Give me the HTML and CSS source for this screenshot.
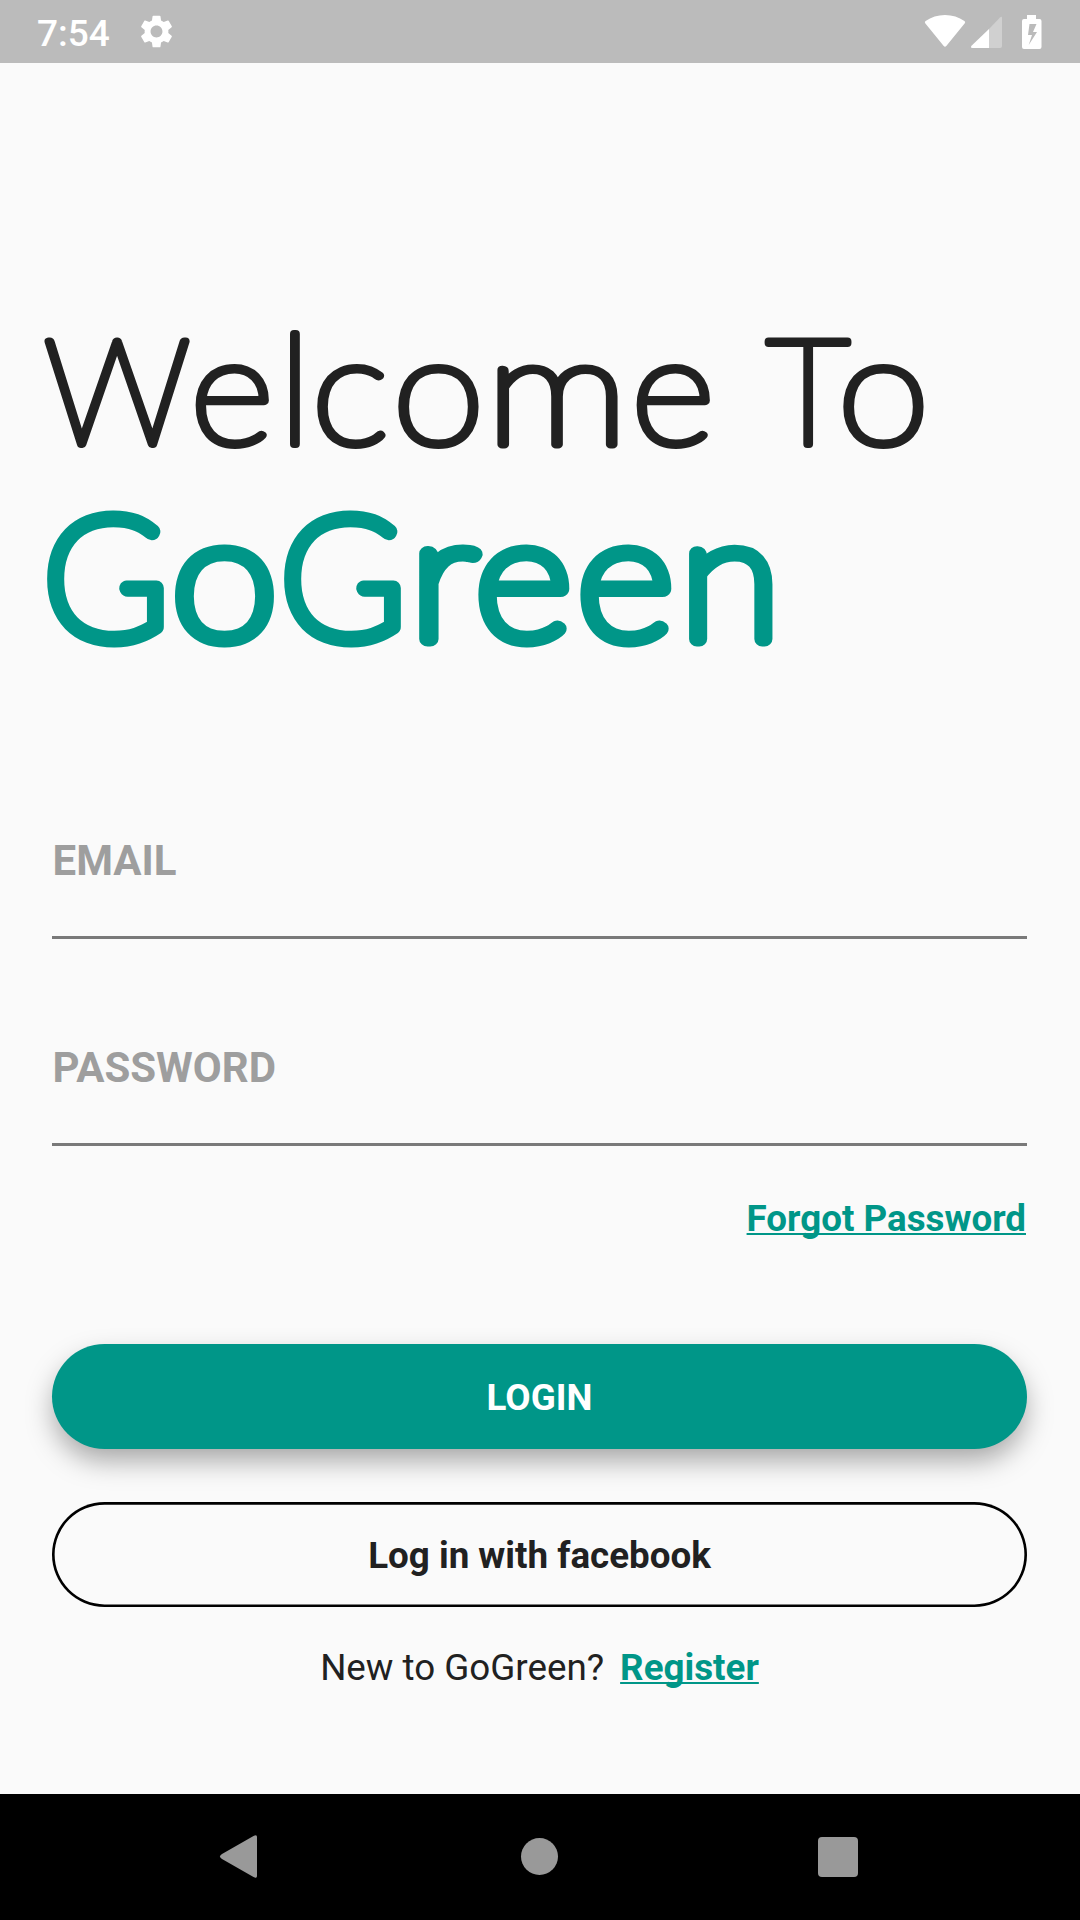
FILE: index.html
```html
<!DOCTYPE html>
<html lang="en">
<head>
<meta charset="utf-8">
<title>GoGreen</title>
<link rel="stylesheet" href="styles.css">
</head>
<body>
<div class="screen">
  <header class="status-bar">
    <span class="clock">7:54</span>
    <svg class="icon-gear" viewBox="2 2 20 20"><path d="M19.14 12.94c.04-.3.06-.61.06-.94 0-.32-.02-.64-.07-.94l2.03-1.58a.49.49 0 0 0 .12-.61l-1.92-3.32a.488.488 0 0 0-.59-.22l-2.39.96c-.5-.38-1.03-.7-1.62-.94l-.36-2.54a.484.484 0 0 0-.48-.41h-3.84c-.24 0-.43.17-.47.41l-.36 2.54c-.59.24-1.13.57-1.62.94l-2.39-.96c-.22-.08-.47 0-.59.22L2.74 8.87c-.12.21-.08.47.12.61l2.03 1.58c-.05.3-.09.63-.09.94s.02.64.07.94l-2.03 1.58a.49.49 0 0 0-.12.61l1.92 3.32c.12.22.37.29.59.22l2.39-.96c.5.38 1.03.7 1.62.94l.36 2.54c.05.24.24.41.48.41h3.84c.24 0 .44-.17.47-.41l.36-2.54c.59-.24 1.13-.56 1.62-.94l2.39.96c.22.08.47 0 .59-.22l1.92-3.32c.12-.22.07-.47-.12-.61l-2.01-1.58zM12 15.6c-1.98 0-3.6-1.62-3.6-3.6s1.62-3.6 3.6-3.6 3.6 1.62 3.6 3.6-1.62 3.6-3.6 3.6z"/></svg>
    <svg class="icon-status" viewBox="0 0 120 36"><path d="M1.2 8.2Q.2 7 1.6 6Q10 0 21 0T40.400 6Q41.800 7 40.800 8.200L22.300 31Q21 32.500 19.700 31Z"/><path class="faded" d="M78 3V31Q78 33 76 33H65V14L76 2.500Q78 1 78 3Z"/><path d="M65 14V33H48.500Q46 33 47.500 30.800Z"/><path fill-rule="evenodd" d="M103 0h9v4h3.500q2 0 2 2v26q0 2-2 2H100q-2 0-2-2V6q0-2 2-2h3ZM105.500 9L104 20h4L104.700 30L113 17h-4L112.500 9Z"/></svg>
  </header>

  <main class="content">
    <h1 class="headline">
      <svg class="headline-art" viewBox="0 0 1000 360">
        <text class="welcome" y="140.500"><tspan x="14">W</tspan><tspan class="lower" x="160" textLength="83.5" lengthAdjust="spacingAndGlyphs">e</tspan><tspan class="lower" x="249">l</tspan><tspan class="lower" x="281.5" textLength="77" lengthAdjust="spacingAndGlyphs">c</tspan><tspan class="lower" x="362.5" textLength="92" lengthAdjust="spacingAndGlyphs">o</tspan><tspan class="lower" x="455.5" textLength="143" lengthAdjust="spacingAndGlyphs">m</tspan><tspan class="lower" x="601" textLength="83.5" lengthAdjust="spacingAndGlyphs">e</tspan> <tspan x="736.5">T</tspan><tspan class="lower" x="807.500" textLength="92" lengthAdjust="spacingAndGlyphs">o</tspan></text>
        <text class="brand" y="336"><tspan x="13">G</tspan><tspan class="lower" x="141.5" textLength="106" lengthAdjust="spacingAndGlyphs">o</tspan><tspan x="250">G</tspan><tspan class="lower" x="379.5" textLength="68" lengthAdjust="spacingAndGlyphs">r</tspan><tspan class="lower" x="445" textLength="96.5" lengthAdjust="spacingAndGlyphs">e</tspan><tspan class="lower" x="547" textLength="96.5" lengthAdjust="spacingAndGlyphs">e</tspan><tspan class="lower" x="650" textLength="100.5" lengthAdjust="spacingAndGlyphs">n</tspan></text>
      </svg>
    </h1>

    <form class="login">
      <div class="field">EMAIL</div>
      <div class="field">PASSWORD</div>
      <a class="link forgot">Forgot Password</a>
      <div class="button primary">LOGIN</div>
      <div class="button outlined">Log in with facebook</div>
      <p class="register"><span>New to GoGreen?</span><a class="link">Register</a></p>
    </form>
  </main>

  <nav class="nav-bar">
    <svg viewBox="0 0 42 58"><path d="M3 31Q-1 28.500 3 26L34.500 8Q38 6 38 9V48Q38 51 34.500 49Z"/></svg>
    <svg viewBox="0 0 42 58"><circle cx="21.500" cy="28.500" r="18.500"/></svg>
    <svg viewBox="0 0 42 58"><rect x="1" y="9" width="40" height="40" rx="4"/></svg>
  </nav>
</div>
</body>
</html>
```

FILE: styles.css
```css
* { box-sizing: border-box; }
body { margin: 0; font-family: Roboto, sans-serif; color: #212121; background: #fafafa; }
.screen { width: 1080px; height: 1920px; display: flex; flex-direction: column; overflow: hidden; }

.status-bar { height: 63px; background: #bbb; display: flex; align-items: center; padding: 0 38px 0 37px; color: #fff; }
.status-bar svg { fill: #fff; }
.clock { font-size: 37px; font-weight: 500; line-height: 44px; padding-top: 4px; width: 103px; }
.icon-gear { width: 33px; height: 33px; }
.icon-status { width: 120px; height: 36px; margin: 2px -1.5px 0 auto; }
.icon-status .faded { fill: #d0d0d0; }

.content { flex: 1; padding: 240px 53px 0 52px; }
.headline { margin: 0; height: 491px; font-weight: 400; }
.headline-art { display: block; width: 1000px; height: 360px; margin-left: -22px; overflow: visible; }
.headline-art text { font-family: Lato, sans-serif; stroke-linejoin: round; stroke-linecap: round; }
.welcome { font-size: 146px; font-weight: 100; fill: #212121; stroke: #212121; stroke-width: 8px; }
.welcome .lower { font-size: 153px; }
.brand { font-size: 170px; font-weight: 100; fill: #009688; stroke: #009688; stroke-width: 15px; }
.brand .lower { font-size: 175px; }

.login { display: flex; flex-direction: column; }
.field { height: 145px; margin-bottom: 62px; padding: 42px 0 0 .5px; border-bottom: 3px solid #797979; font-size: 42px; line-height: 49px; font-weight: 700; color: #9e9e9e; }
.link { color: #009688; font-weight: 700; text-decoration: underline; text-decoration-thickness: 2px; text-underline-offset: 2px; text-decoration-skip-ink: none; }
.forgot { align-self: flex-end; margin-top: -11px; padding-right: 1px; font-size: 36.75px; line-height: 43px; }
.button { height: 105px; padding-top: 2px; border-radius: 53px; display: flex; align-items: center; justify-content: center; font-size: 36.75px; font-weight: 700; }
.primary { margin-top: 104px; background: #009688; color: #fff; box-shadow: 0 13px 28px -2px rgba(0,0,0,.35); }
.outlined { margin-top: 52.5px; box-shadow: inset 0 0 0 2.625px #000; }
.register { display: flex; justify-content: center; gap: 16px; margin: 39.5px 0 0; font-size: 36.75px; line-height: 43px; }

.nav-bar { height: 126px; background: #000; display: flex; justify-content: space-between; align-items: center; padding: 0 221px 0 219px; }
.nav-bar svg { width: 42px; height: 58px; fill: #999; }
```
